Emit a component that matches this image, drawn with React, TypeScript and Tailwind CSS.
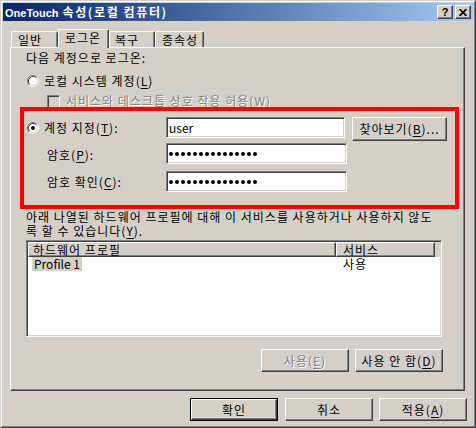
import React from 'react';

// classic 3D edges
const raised =
  'border border-t-white border-l-white border-r-[#404040] border-b-[#404040] shadow-[inset_-1px_-1px_0_#808080]';
const sunken =
  'border border-t-[#808080] border-l-[#808080] border-r-white border-b-white shadow-[inset_1px_1px_0_#404040,inset_-1px_-1px_0_#d4d0c8]';
const grayText = 'text-[#808080] [text-shadow:1px_1px_0_#fff]';

const Radio: React.FC<{ checked?: boolean }> = ({ checked }) => (
  <svg width="12" height="12" viewBox="0 0 12 12" className="shrink-0">
    <circle cx="6" cy="6" r="5" fill="#fff" />
    <path d="M2.11 9.89A5.5 5.5 0 0 1 9.89 2.11" stroke="#808080" fill="none" />
    <path d="M9.89 2.11A5.5 5.5 0 0 1 2.11 9.89" stroke="#fff" fill="none" />
    <path d="M2.82 9.18A4.5 4.5 0 0 1 9.18 2.82" stroke="#404040" fill="none" />
    <path d="M9.18 2.82A4.5 4.5 0 0 1 2.82 9.18" stroke="#d4d0c8" fill="none" />
    {checked && <circle cx="6" cy="6" r="2" fill="#000" />}
  </svg>
);

const Button: React.FC<{
  w: string;
  h?: string;
  disabled?: boolean;
  isDefault?: boolean;
  className?: string;
  children: React.ReactNode;
}> = ({ w, h = 'h-[23px]', disabled, isDefault, className = '', children }) => {
  const face = (
    <div className={`${raised} w-full h-full flex items-center justify-center ${disabled ? grayText : ''}`}>
      {children}
    </div>
  );
  return (
    <div className={`${w} ${h} shrink-0 ${isDefault ? 'border border-black' : ''} ${className}`}>{face}</div>
  );
};

const Dots: React.FC = () => (
  <div className="flex items-center gap-[2px] ml-[2px]">
    {Array.from({ length: 15 }).map((_, i) => (
      <span key={i} className="w-[4px] h-[4px] rounded-full bg-black" />
    ))}
  </div>
);

const Tab: React.FC<{ w: string; pl: string; selected?: boolean; children: React.ReactNode }> = ({
  w,
  pl,
  selected,
  children,
}) => (
  <div
    className={`${w} ${pl} shrink-0 bg-[#d4d0c8] rounded-t-[2px] border-t border-l border-t-white border-l-white border-r border-r-[#404040] shadow-[inset_-1px_0_0_#808080] pt-[1px] ${
      selected ? 'h-[19px] relative z-10' : 'h-[16px] mt-[2px]'
    }`}
  >
    {children}
  </div>
);

export default function App() {
  return (
    <div className="w-[476px] h-[428px] bg-[#d4d0c8] border border-t-[#d4d0c8] border-l-[#d4d0c8] border-r-[#404040] border-b-[#404040] font-['Noto_Sans_CJK_KR','Liberation_Sans',sans-serif] text-[12px] leading-[14px] tracking-[1px] text-black">
      <div className="h-full border border-t-white border-l-white border-r-[#808080] border-b-[#808080] p-px flex flex-col">
        {/* Title bar */}
        <div className="h-[18px] bg-linear-to-r from-[#0a246a] to-[#a6caf0] flex items-center pl-[2px] pr-[2px]">
          <div className="text-white font-bold whitespace-nowrap flex items-baseline">
            <span className="font-['Liberation_Sans',sans-serif] text-[11px] tracking-normal">OneTouch</span>
            <span className="ml-[4px] text-[12px] tracking-[1.6px]">속성(로컬 컴퓨터)</span>
          </div>
          <div className="ml-auto flex gap-[2px]">
            <div className={`${raised} w-[16px] h-[14px] bg-[#d4d0c8] flex items-center justify-center font-['Liberation_Sans',sans-serif] font-bold text-[11px] leading-[11px] tracking-normal`}>
              ?
            </div>
            <div className={`${raised} w-[16px] h-[14px] bg-[#d4d0c8] flex items-center justify-center`}>
              <svg width="8" height="7" viewBox="0 0 8 7">
                <path d="M0.5 0 L7.5 7 M7.5 0 L0.5 7" stroke="#000" strokeWidth="1.7" />
              </svg>
            </div>
          </div>
        </div>

        {/* Tabs */}
        <div className="mt-[8px] ml-[8px] flex items-start h-[19px]">
          <Tab w="w-[47px]" pl="pl-[6px]">일반</Tab>
          <Tab w="w-[51px]" pl="pl-[6px]" selected>
            로그온
          </Tab>
          <Tab w="w-[46px]" pl="pl-[5px]">복구</Tab>
          <Tab w="w-[49px]" pl="pl-[6px]">종속성</Tab>
        </div>

        {/* Tab panel */}
        <div className="relative -mt-px ml-[7px] w-[455px] h-[344px] border-t border-l border-t-white border-l-white border-r border-b border-r-[#404040] border-b-[#404040] shadow-[inset_-1px_-1px_0_#808080] flex flex-col whitespace-nowrap">
          <div className="mt-[3px] ml-[15px]">다음 계정으로 로그온:</div>

          <div className="mt-[9px] ml-[16px] h-[14px] flex items-center">
            <Radio />
            <span className="ml-[5px]">
              로컬 시스템 계정(<u className="underline-offset-2">L</u>)
            </span>
          </div>

          <div className="mt-[6px] ml-[36px] h-[14px] flex items-center">
            <div className={`${sunken} w-[13px] h-[13px] bg-[#d4d0c8] shrink-0`} />
            <span className={`ml-[6px] ${grayText}`}>
              서비스와 데스크톱 상호 작용 허용(<u className="underline-offset-2">W</u>)
            </span>
          </div>

          {/* account row */}
          <div className="mt-[9px] flex items-start h-[24px]">
            <div className="w-[155px] pl-[16px] pt-[4px] shrink-0">
              <div className="h-[14px] flex items-center">
                <Radio checked />
                <span className="ml-[5px]">
                  계정 지정(<u className="underline-offset-2">T</u>):
                </span>
              </div>
            </div>
            <div className={`${sunken} w-[179px] h-[21px] bg-white flex items-center pl-[2px] tracking-normal`}>user</div>
            <Button w="w-[95px]" h="h-[24px]" className="ml-[7px]">
              찾아보기(<u className="underline-offset-2">B</u>)...
            </Button>
          </div>

          <div className="mt-[2px] flex items-start h-[21px]">
            <div className="w-[155px] pl-[36px] pt-[5px] shrink-0">
              암호(<u className="underline-offset-2">P</u>):
            </div>
            <div className={`${sunken} w-[181px] h-[21px] bg-white flex items-center`}>
              <Dots />
            </div>
          </div>

          <div className="mt-[7px] flex items-start h-[21px]">
            <div className="w-[155px] pl-[36px] pt-[4px] shrink-0">
              암호 확인(<u className="underline-offset-2">C</u>):
            </div>
            <div className={`${sunken} w-[181px] h-[21px] bg-white flex items-center`}>
              <Dots />
            </div>
          </div>

          <div className="mt-[18px] ml-[15px] flex flex-col">
            <div className="h-[14px]">아래 나열된 하드웨어 프로필에 대해 이 서비스를 사용하거나 사용하지 않도</div>
            <div className="h-[14px]">
              록 할 수 있습니다(<u className="underline-offset-2">Y</u>).
            </div>
          </div>

          {/* hardware profile list */}
          <div className={`${sunken} mt-[2px] ml-[15px] w-[416px] h-[97px] bg-white flex flex-col`}>
            <div className="h-[15px] flex bg-[#d4d0c8] mt-px ml-px mr-px">
              <div className={`${raised} w-[308px] h-full pl-[4px] leading-[13px]`}>하드웨어 프로필</div>
              <div className={`${raised} w-[99px] h-full pl-[6px] leading-[13px]`}>서비스</div>
            </div>
            <div className="h-[14px] flex ml-px">
              <div className="w-[308px] pl-[4px]">
                <span className="inline-block bg-[#d4d0c8] px-[2px] tracking-normal">Profile 1</span>
              </div>
              <div className="pl-[7px]">사용</div>
            </div>
          </div>

          <div className="mt-[12px] ml-[250px] flex">
            <Button w="w-[88px]" disabled>
              사용(<u className="underline-offset-2">E</u>)
            </Button>
            <Button w="w-[88px]" className="ml-[6px]">
              사용 안 함(<u className="underline-offset-2">D</u>)
            </Button>
          </div>

          {/* red highlight annotation */}
          <div className="absolute left-[9px] top-[59px] w-[439px] h-[102px] border-4 border-[#ff0000] pointer-events-none" />
        </div>

        {/* dialog buttons */}
        <div className="mt-[7px] flex ml-[187px]">
          <Button w="w-[88px]" isDefault>
            확인
          </Button>
          <Button w="w-[88px]" className="ml-[7px]">
            취소
          </Button>
          <Button w="w-[88px]" className="ml-[6px]">
            적용(<u className="underline-offset-2">A</u>)
          </Button>
        </div>
      </div>
    </div>
  );
}
